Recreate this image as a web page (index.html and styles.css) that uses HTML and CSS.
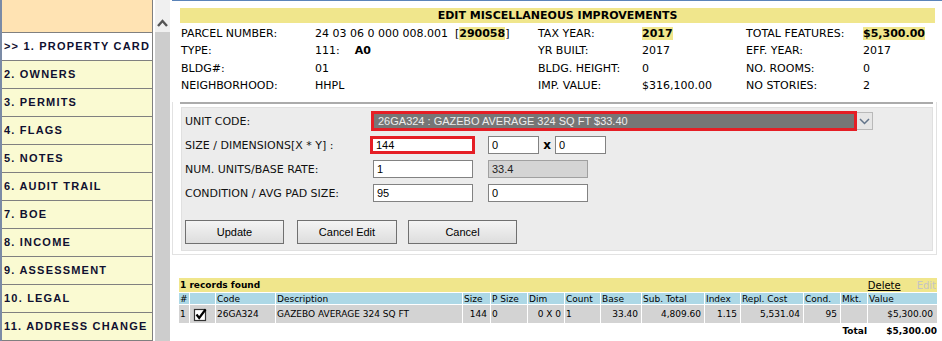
FILE: index.html
```html
<!DOCTYPE html>
<html lang="en">
<head>
    <meta charset="UTF-8">
    <title>Edit Miscellaneous Improvements</title>
    <link rel="stylesheet" href="styles.css">
</head>
<body>
<div class="page">
    <nav class="sidebar">
        <div class="side-head"></div>
        <a class="side-item active" href="#">&gt;&gt; 1. PROPERTY CARD</a>
        <a class="side-item" href="#">2. OWNERS</a>
        <a class="side-item" href="#">3. PERMITS</a>
        <a class="side-item" href="#">4. FLAGS</a>
        <a class="side-item" href="#">5. NOTES</a>
        <a class="side-item" href="#">6. AUDIT TRAIL</a>
        <a class="side-item" href="#">7. BOE</a>
        <a class="side-item" href="#">8. INCOME</a>
        <a class="side-item" href="#">9. ASSESSMENT</a>
        <a class="side-item" href="#">10. LEGAL</a>
        <a class="side-item" href="#">11. ADDRESS CHANGE</a>
    </nav>
    <div class="scrollbar">
        <div class="scroll-up">
            <svg width="11" height="8" viewBox="0 0 11 8"><polyline points="1,7 5.5,2 10,7" fill="none" stroke="#555" stroke-width="2.4"/></svg>
        </div>
        <div class="scroll-thumb"></div>
    </div>

    <main class="content">
        <div class="title">EDIT MISCELLANEOUS IMPROVEMENTS</div>
        <div class="info">
            <span>PARCEL NUMBER:</span>
            <span>24 03 06 0 000 008.001&nbsp; [<b class="hl">290058</b>]</span>
            <span>TAX YEAR:</span>
            <span><b class="hl">2017</b></span>
            <span>TOTAL FEATURES:</span>
            <span><b class="hl">$5,300.00</b></span>

            <span>TYPE:</span>
            <span>111:<b class="type-code">A0</b></span>
            <span>YR BUILT:</span>
            <span>2017</span>
            <span>EFF. YEAR:</span>
            <span>2017</span>

            <span>BLDG#:</span>
            <span>01</span>
            <span>BLDG. HEIGHT:</span>
            <span>0</span>
            <span>NO. ROOMS:</span>
            <span>0</span>

            <span>NEIGHBORHOOD:</span>
            <span>HHPL</span>
            <span>IMP. VALUE:</span>
            <span>$316,100.00</span>
            <span>NO STORIES:</span>
            <span>2</span>
        </div>

        <div class="edit-box">
            <div class="rule"></div>
            <div class="panel">
                <div class="form-row">
                    <label>UNIT CODE:</label>
                    <div class="select">
                        <div class="select-value">26GA324 : GAZEBO AVERAGE 324 SQ FT $33.40</div>
                        <div class="select-arrow">
                            <svg width="11" height="7" viewBox="0 0 11 7"><polyline points="1,1 5.5,5.5 10,1" fill="none" stroke="#62748a" stroke-width="1.5"/></svg>
                        </div>
                    </div>
                </div>
                <div class="form-row">
                    <label>SIZE / DIMENSIONS[X * Y] :</label>
                    <input class="field error" type="text" value="144">
                    <div class="dims">
                        <input class="field small" type="text" value="0">
                        <span class="times">x</span>
                        <input class="field small" type="text" value="0">
                    </div>
                </div>
                <div class="form-row">
                    <label>NUM. UNITS/BASE RATE:</label>
                    <input class="field" type="text" value="1">
                    <input class="field disabled" type="text" value="33.4" disabled>
                </div>
                <div class="form-row">
                    <label>CONDITION / AVG PAD SIZE:</label>
                    <input class="field" type="text" value="95">
                    <input class="field" type="text" value="0">
                </div>
                <div class="buttons">
                    <button class="btn btn-update">Update</button>
                    <button class="btn btn-cancel-edit">Cancel Edit</button>
                    <button class="btn btn-cancel">Cancel</button>
                </div>
            </div>
        </div>

        <table class="grid">
            <colgroup>
                <col style="width:10px"><col style="width:25px"><col style="width:59px"><col style="width:186px">
                <col style="width:27px"><col style="width:36px"><col style="width:36px"><col style="width:35px">
                <col style="width:40px"><col style="width:62px"><col style="width:35px"><col style="width:62px">
                <col style="width:36px"><col style="width:26px"><col style="width:69px">
            </colgroup>
            <tr class="bar">
                <td colspan="15">
                    <div class="bar-inner">
                        <span>1 records found</span>
                        <span class="links"><a class="link-delete" href="#">Delete</a><span class="link-edit">Edit</span></span>
                    </div>
                </td>
            </tr>
            <tr class="head">
                <td>#</td><td></td><td>Code</td><td>Description</td><td>Size</td><td>P Size</td><td>Dim</td>
                <td>Count</td><td>Base</td><td>Sub. Total</td><td>Index</td><td>Repl. Cost</td><td>Cond.</td><td>Mkt.</td><td>Value</td>
            </tr>
            <tr class="row">
                <td>1</td>
                <td class="chk">
                    <svg width="15" height="15" viewBox="0 0 15 15"><rect x="1.5" y="2.5" width="11" height="11" fill="#fff" stroke="#333" stroke-width="1.2"/><path d="M3.5 7.5 L6.2 11 L12.5 2.5" fill="none" stroke="#000" stroke-width="2.2"/></svg>
                </td>
                <td>26GA324</td>
                <td>GAZEBO AVERAGE 324 SQ FT</td>
                <td class="num">144</td>
                <td>0</td>
                <td class="num">0 X 0</td>
                <td>1</td>
                <td class="num">33.40</td>
                <td class="num">4,809.60</td>
                <td class="num">1.15</td>
                <td class="num">5,531.04</td>
                <td class="num">95</td>
                <td></td>
                <td class="num val">$5,300.00</td>
            </tr>
            <tr class="total">
                <td colspan="14" class="total-label">Total</td>
                <td class="total-value">$5,300.00</td>
            </tr>
        </table>
    </main>
</div>
</body>
</html>
```

FILE: styles.css
```css
body {
    margin: 0;
    font-family: "DejaVu Sans", Verdana, sans-serif;
    font-size: 11px;
    color: #000;
    background: #fff;
}
.page {
    display: flex;
    height: 341px;
    overflow: hidden;
}

/* left menu frame */
.sidebar {
    flex: none;
    width: 150px;
    border-left: 2px solid #7b8ba6;
    border-right: 1px solid #808080;
    font-family: "Liberation Sans", Arial, sans-serif;
}
.side-head {
    height: 32px;
    background: #ffe3b3;
    border-bottom: 1px solid #808080;
}
.side-item {
    display: block;
    height: 27px;
    line-height: 27px;
    padding-left: 2px;
    border-bottom: 1px solid #808080;
    background: #fafad2;
    color: #101030;
    font-size: 11px;
    font-weight: bold;
    letter-spacing: 1.2px;
    white-space: nowrap;
    overflow: hidden;
    text-decoration: none;
}
.side-item.active {
    background: #fff;
}
.scrollbar {
    flex: none;
    width: 15px;
    margin-left: 2px;
    display: flex;
    flex-direction: column;
}
.scroll-up {
    height: 32px;
    background: #f0f0f0;
    display: flex;
    justify-content: center;
    align-items: flex-start;
    padding-top: 0;
}
.scroll-up svg {
    margin-top: 19px;
}
.scroll-thumb {
    flex: 1;
    background: #cdcdcd;
}

/* main frame */
.content {
    flex: 1;
    min-width: 0;
    margin-left: 2px;
    border-top: 1px solid #5a83b8;
    padding: 7px 7px 0 8px;
}
.title {
    background: #f0e68c;
    height: 15px;
    line-height: 15px;
    text-align: center;
    font-weight: bold;
}
.info {
    display: grid;
    grid-template-columns: 134px 223px 104px 104px 117px auto;
    grid-auto-rows: 17.5px;
    align-items: center;
    margin-top: 1.5px;
    padding-left: 1px;
    white-space: nowrap;
}
.hl {
    background: #f0e68c;
}
.type-code {
    margin-left: 15px;
}

.edit-box {
    margin: 7px -2px 0 -8px;
    border: 1px solid #e2e2e2;
    border-top: 0;
    padding: 0 3px 3px 7px;
}
.rule {
    height: 2px;
    background: #ababab;
}
.panel {
    margin: 3.5px 0 0 1px;
    background: #ececec;
    border: 1px solid #e0e0e0;
    padding: 3px 3px 6px 3px;
}
.form-row {
    display: grid;
    grid-template-columns: 188px 115px auto;
    align-items: center;
    height: 20px;
    margin-bottom: 4px;
}
.form-row label {
    color: #111;
}
.select {
    grid-column: 2 / 4;
    display: flex;
    align-items: center;
}
.select-value {
    box-sizing: border-box;
    width: 486px;
    height: 20px;
    margin-left: -2px;
    border: 3px solid #e51e25;
    background: #767676;
    color: #ededed;
    font-family: "Liberation Sans", Arial, sans-serif;
    font-size: 11px;
    line-height: 14px;
    padding-left: 4px;
    white-space: nowrap;
}
.select-arrow {
    box-sizing: border-box;
    width: 16px;
    height: 18px;
    border: 1px solid #b9b9b9;
    border-left: 0;
    background: #e6e6e6;
    display: flex;
    align-items: center;
    justify-content: center;
}
.field {
    box-sizing: border-box;
    width: 100px;
    height: 18px;
    margin: 0;
    border: 1px solid #828282;
    background: #fff;
    padding: 0 3px;
    font-family: "Liberation Sans", Arial, sans-serif;
    font-size: 11px;
    color: #000;
}
.field.error {
    width: 105px;
    margin-left: -3px;
    border: 3px solid #e51e25;
    outline: none;
}
.field.small {
    width: 51px;
}
.field.disabled {
    background: #d4d4d4;
    border-color: #a0a0a0;
    color: #222;
}
.dims {
    display: flex;
    align-items: center;
}
.times {
    width: 16px;
    text-align: center;
    font-weight: bold;
    font-size: 12px;
}
.buttons {
    margin-top: 17px;
    display: flex;
}
.btn {
    height: 24px;
    border: 1px solid #707070;
    background: linear-gradient(#f4f4f4, #dddddd);
    font-family: "Liberation Sans", Arial, sans-serif;
    font-size: 11px;
    color: #000;
    padding: 0;
}
.btn-update {
    width: 99px;
    margin-right: 13px;
}
.btn-cancel-edit {
    width: 100px;
    margin-right: 11px;
}
.btn-cancel {
    width: 109px;
}

/* records grid */
.grid {
    border-collapse: separate;
    border-spacing: 1px;
    table-layout: fixed;
    width: 760px;
    margin: 22px 0 0 -2px;
    font-size: 9px;
}
.grid td {
    padding: 0 1px;
    white-space: nowrap;
    overflow: hidden;
}
.bar td {
    background: #f0e68c;
    height: 14px;
    font-weight: bold;
}
.bar-inner {
    display: flex;
    justify-content: space-between;
    align-items: center;
}
.links {
    font-size: 10px;
    font-weight: normal;
}
.link-delete {
    color: #000;
}
.link-edit {
    color: #c4c4c4;
    margin-left: 16px;
}
.head td {
    background: #add8e6;
    height: 11px;
}
.row td {
    background: #d3d3d3;
    height: 18px;
}
.row td.chk {
    padding-left: 3px;
    line-height: 0;
}
.row td.num {
    text-align: right;
    padding-right: 3px;
}
.row td.val {
    padding-right: 4px;
}
.total td {
    height: 13px;
    font-weight: bold;
    text-align: right;
}
.total td.total-label {
    padding-right: 0;
}
.total td.total-value {
    padding-right: 0;
}
```
